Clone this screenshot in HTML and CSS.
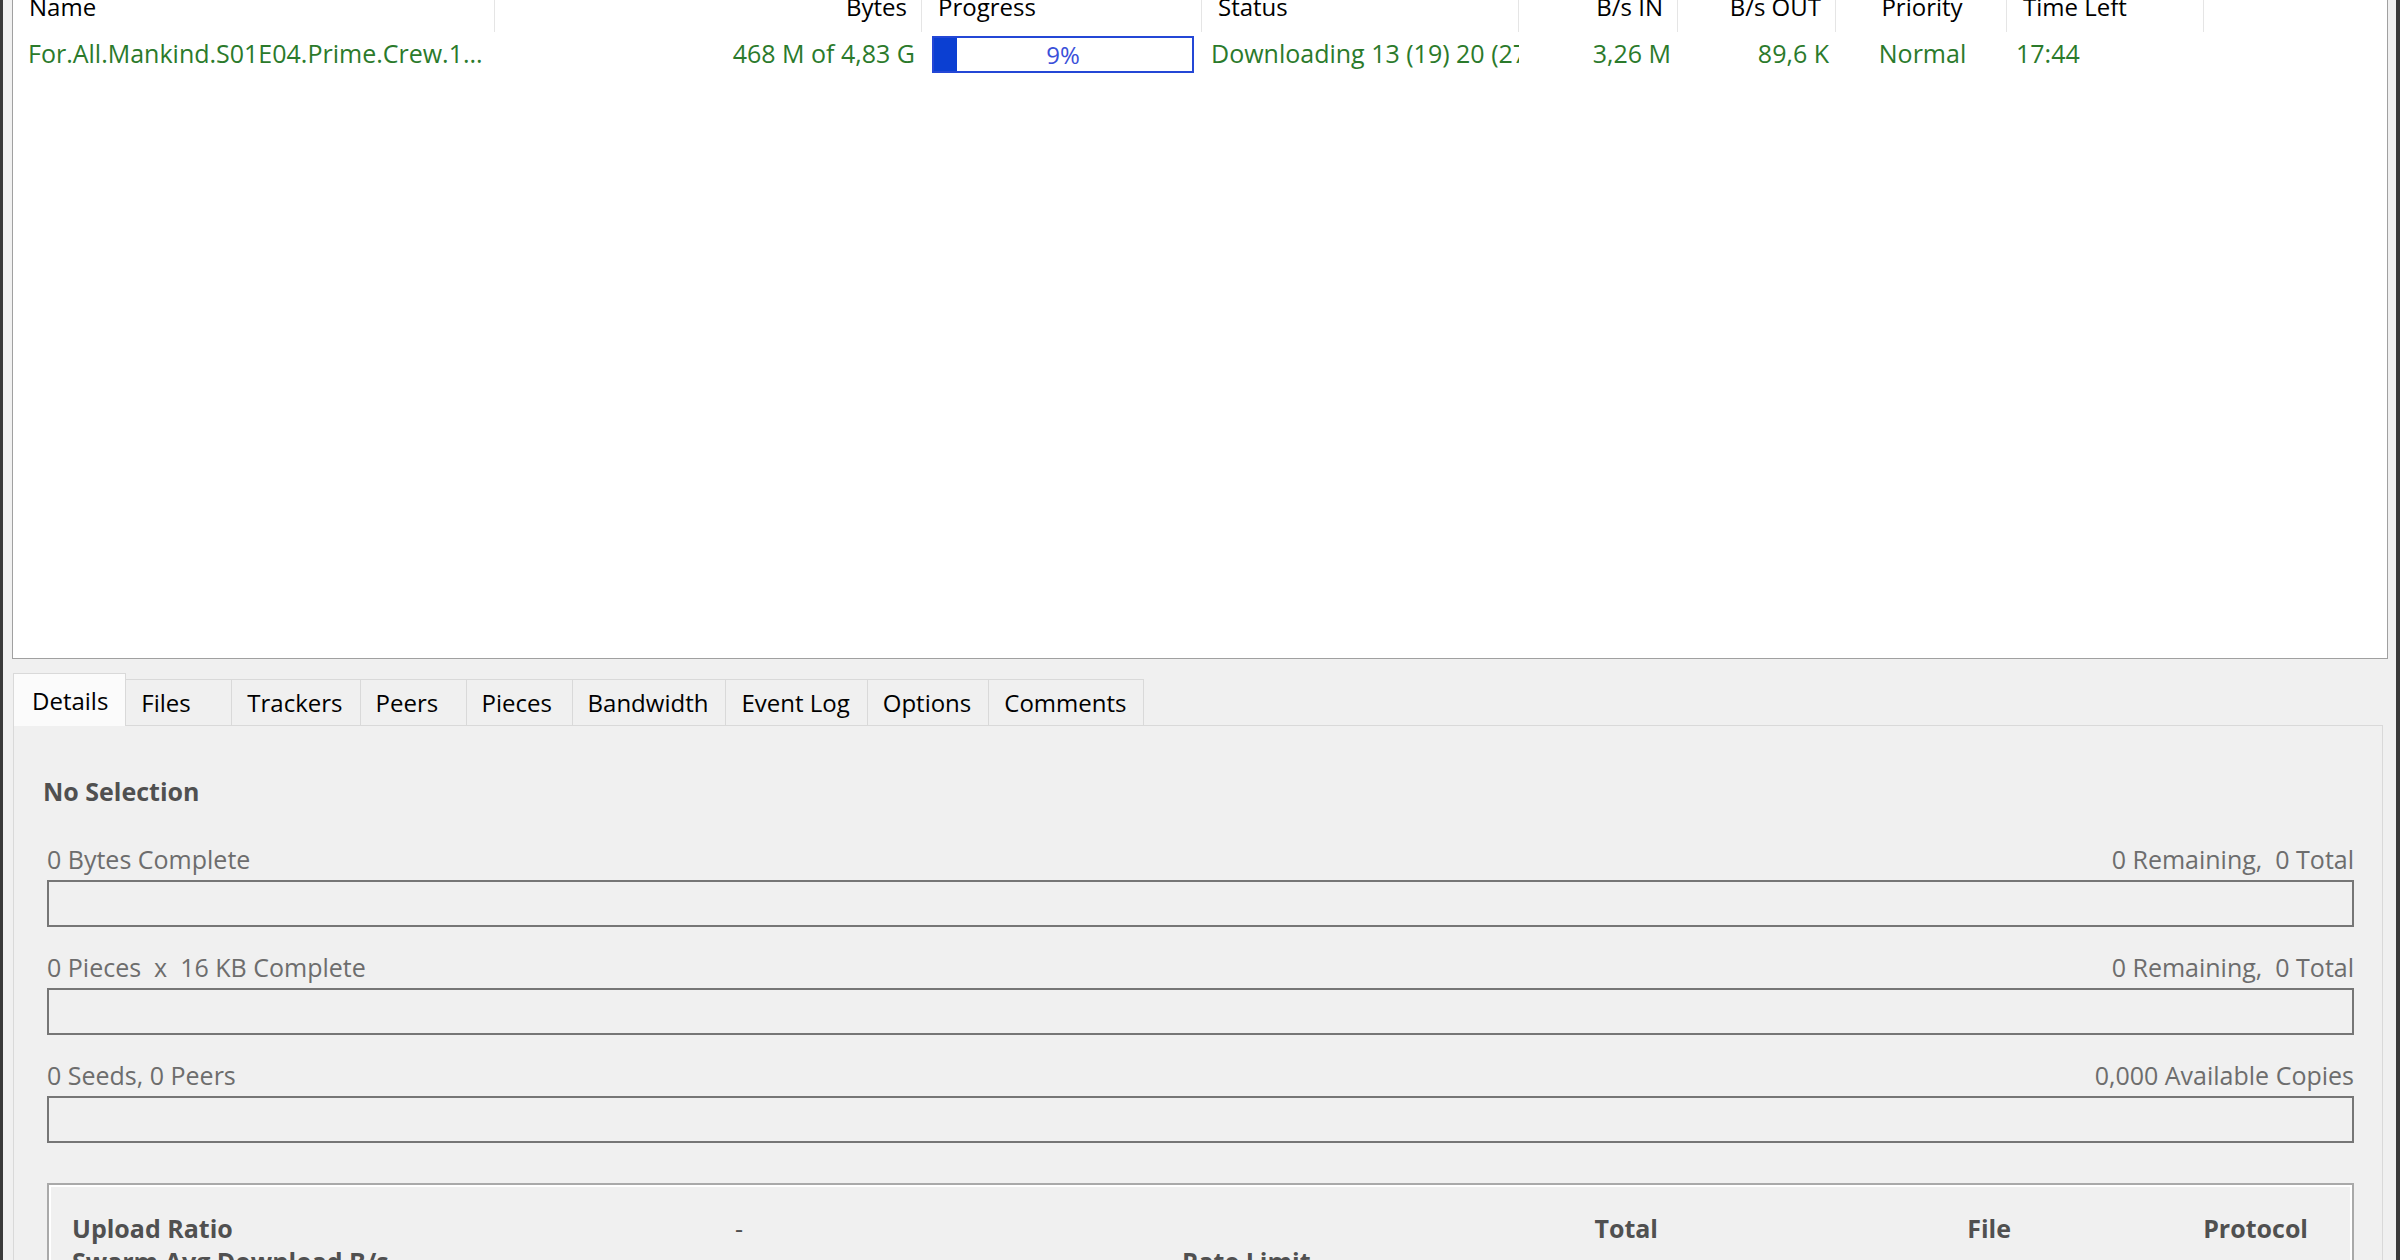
FILE: index.html
```html
<!DOCTYPE html>
<html lang="en">
<head>
    <meta charset="UTF-8"/>
    <title>Transfers</title>
    <link rel="stylesheet" href="styles.css">
</head>
<body>
<div class="window">
    <div class="torrents">
        <div class="grid head">
            <div class="col">Name</div>
            <div class="col num">Bytes</div>
            <div class="col">Progress</div>
            <div class="col">Status</div>
            <div class="col num">B/s IN</div>
            <div class="col num">B/s OUT</div>
            <div class="col mid">Priority</div>
            <div class="col">Time Left</div>
            <div class="col end"></div>
        </div>
        <div class="grid row">
            <div class="cell name">For.All.Mankind.S01E04.Prime.Crew.1...</div>
            <div class="cell num">468 M of 4,83 G</div>
            <div class="cell prog"><div class="bar" style="--p:9%">9%</div></div>
            <div class="cell">Downloading 13 (19) 20 (27)</div>
            <div class="cell num">3,26 M</div>
            <div class="cell num">89,6 K</div>
            <div class="cell mid">Normal</div>
            <div class="cell">17:44</div>
            <div class="cell"></div>
        </div>
    </div>

    <div class="tabs">
        <div class="tab on">Details</div>
        <div class="tab">Files</div>
        <div class="tab">Trackers</div>
        <div class="tab">Peers</div>
        <div class="tab">Pieces</div>
        <div class="tab">Bandwidth</div>
        <div class="tab">Event Log</div>
        <div class="tab">Options</div>
        <div class="tab">Comments</div>
    </div>

    <div class="panel">
        <div class="title">No Selection</div>

        <div class="stat">
            <div class="labels"><span>0 Bytes Complete</span><span>0 Remaining,  0 Total</span></div>
            <div class="meter"></div>
        </div>
        <div class="stat">
            <div class="labels"><span>0 Pieces  x  16 KB Complete</span><span>0 Remaining,  0 Total</span></div>
            <div class="meter"></div>
        </div>
        <div class="stat">
            <div class="labels"><span>0 Seeds, 0 Peers</span><span>0,000 Available Copies</span></div>
            <div class="meter"></div>
        </div>

        <div class="group">
            <div class="b">Upload Ratio</div>
            <div class="dash">-</div>
            <div class="b r">Total</div>
            <div class="b r">File</div>
            <div class="b r">Protocol</div>

            <div class="b">Swarm Avg Download B/s</div>
            <div></div>
            <div class="b">Rate Limit</div>
            <div></div>
            <div></div>
        </div>
    </div>
</div>
</body>
</html>
```

FILE: styles.css
```css
html, body { margin: 0; height: 100%; overflow: hidden; }
body { background: #f0f0f0; font-family: "Open Sans", "Noto Sans", sans-serif; font-size: 24px; color: #000; }

.window { min-height: 1300px; margin-top: -16px; border-left: 3px solid #3a3a3a; border-right: 4px solid #3a3a3a; padding: 0 8px 0 9px; }

/* list of transfers */
.torrents { height: 675px; box-sizing: border-box; background: #fff; border: 1px solid #a0a0a0; }
.grid { display: grid; grid-template-columns: 482px 427px 280px 317px 159px 158px 171px 197px 1fr; }
.head { height: 47px; }
.head .col { display: flex; align-items: center; padding: 0 14px 4px 16px; border-right: 1px solid #e5e5e5; white-space: nowrap; }
.head .end { border-right: 0; }
.row { height: 44px; color: #2b7a2b; font-size: 25px; }
.row .cell { display: flex; align-items: center; padding: 0 7px 2px 9px; white-space: nowrap; overflow: hidden; }
.row .name { padding-left: 15px; }
.num { justify-content: flex-end; }
.mid { justify-content: center; }
.row .prog { padding: 0 8px 0 10px; font-size: 24px; }
.bar { flex: 1; height: 37px; box-sizing: border-box; border: 2px solid #2447d6; display: flex; align-items: center; justify-content: center; color: #3a4fd9;
       background: linear-gradient(90deg, #0b3fd2 var(--p), #fff var(--p)); }

/* tab strip */
.tabs { display: flex; align-items: flex-end; height: 52px; margin: 14px 0 0 1px; }
.tab { height: 46px; box-sizing: border-box; display: flex; align-items: center; min-width: 107px; padding: 0 17px 0 15px; margin-left: -1px;
       border: 1px solid #d9d9d9; border-bottom: 0; background: #f0f0f0; white-space: nowrap; }
.tab:first-child { margin-left: 0; }
.tab.on { height: 53px; margin-bottom: -1px; padding-left: 18px; background: #fbfbfb; position: relative; z-index: 1; }

/* details panel */
.panel { height: 600px; margin: 0 5px 0 1px; padding: 50px 28px 0 29px; border: 1px solid #d9d9d9; border-bottom: 0; background: #f0f0f0; font-size: 25px; }
.title { font-weight: bold; color: #505050; line-height: 30px; }
.stat { margin: 38px 0 0 4px; }
.stat + .stat { margin-top: 25px; }
.labels { display: flex; justify-content: space-between; line-height: 30px; color: #6d6d6d; white-space: pre; }
.meter { height: 47px; box-sizing: border-box; margin-top: 6px; border: 2px solid #767676; }

.group { margin: 40px 0 0 4px; height: 200px; padding: 28px 44px 0 23px; border: 2px solid #a9a9a9; box-shadow: inset 0 0 0 2px #fff;
         display: grid; grid-template-columns: 663px 447px 1fr 353px 297px; grid-auto-rows: 30px; row-gap: 3px; line-height: 30px; color: #505050; }
.group .b { font-weight: bold; white-space: nowrap; }
.group .r { text-align: right; }
.dash { color: #505050; }
```
